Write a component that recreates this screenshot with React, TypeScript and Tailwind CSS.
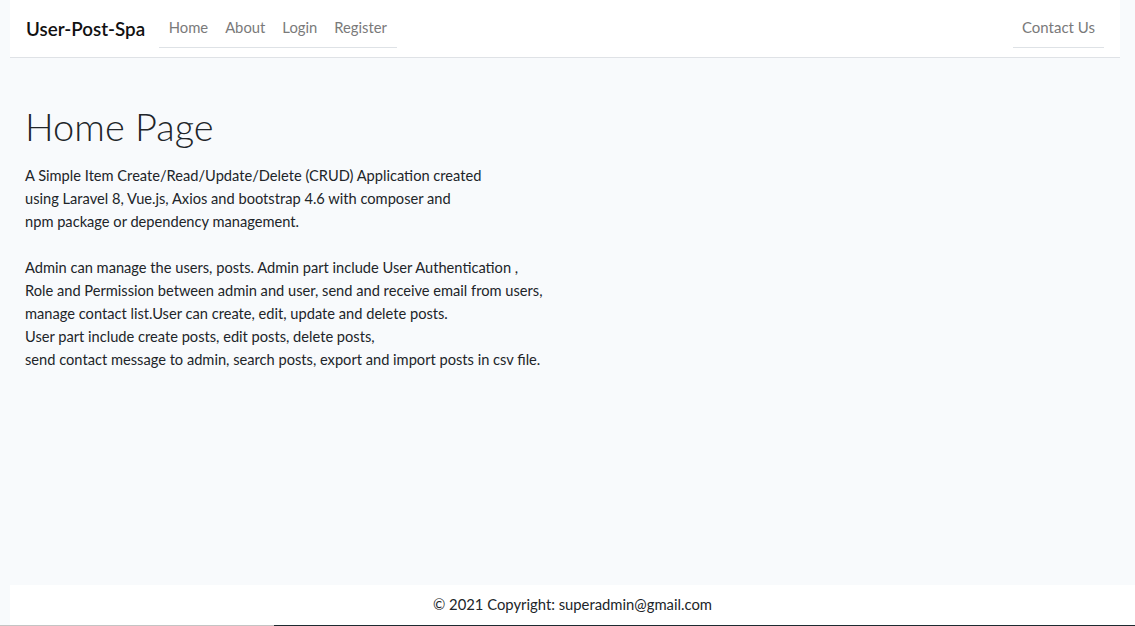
const navLinks = ["Home", "About", "Login", "Register"];

export default function App() {
  return (
    <div
      className="min-h-screen flex flex-col bg-[#f8fafc] text-[#212529]"
      style={{ fontFamily: "Lato, 'Noto Sans', sans-serif" }}
    >
      <nav className="ml-[10px] mr-[15px] h-[58px] bg-white border-b border-[#dfe2e6] flex items-center justify-between pl-4 pr-4">
        <div className="flex items-center h-full">
          <a className="text-[18.8px] font-semibold text-[#111] mr-[14px] pt-[1px]">User-Post-Spa</a>
          <ul className="flex items-center h-[48px] border-b border-[#dee2e6] px-[1px] self-start">
            {navLinks.map((link) => (
              <li key={link}>
                <a className="block px-[8.5px] text-[14.8px] text-[#7a7a7a] pt-[8px]">{link}</a>
              </li>
            ))}
          </ul>
        </div>
        <ul className="flex items-center h-[48px] border-b border-[#dee2e6] self-start">
          <li>
            <a className="block px-[9px] text-[15px] text-[#7a7a7a] pt-[8px]">Contact Us</a>
          </li>
        </ul>
      </nav>

      <main className="flex-1 px-[25px] pt-[46px]">
        <h1 className="text-[38px] font-light leading-[1.2] text-[#212529] mb-[14px]">Home Page</h1>
        <p className="text-[14.65px] leading-[23px]">
          A Simple Item Create/Read/Update/Delete (CRUD) Application created
          <br />
          using Laravel 8, Vue.js, Axios and bootstrap 4.6 with composer and
          <br />
          npm package or dependency management.
          <br />
          <br />
          Admin can manage the users, posts. Admin part include User Authentication ,
          <br />
          Role and Permission between admin and user, send and receive email from users,
          <br />
          manage contact list.User can create, edit, update and delete posts.
          <br />
          User part include create posts, edit posts, delete posts,
          <br />
          send contact message to admin, search posts, export and import posts in csv file.
        </p>
      </main>

      <footer className="ml-[10px] h-[40px] bg-white flex items-center justify-center text-[14.8px] text-[#212529] pb-[1px]">
        © 2021 Copyright: superadmin@gmail.com
      </footer>
      <div className="flex h-px">
        <div className="w-[274px] bg-[#c4c4c4]" />
        <div className="flex-1 bg-[#1e2a30]" />
      </div>
    </div>
  );
}
